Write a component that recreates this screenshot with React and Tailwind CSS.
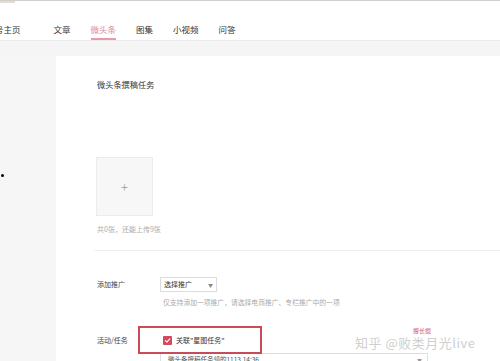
import React from 'react';

const tabs = ['文章', '微头条', '图集', '小视频', '问答'];

function NavTab({ label, active }) {
  return (
    <div className="flex flex-col">
      <span className={`text-[8.5px] leading-[13px] ${active ? 'text-[#e0879a]' : 'text-[#333]'}`}>{label}</span>
      <span className={`mt-[2px] h-[2px] ${active ? 'bg-[#e79aab]' : 'bg-transparent'}`} />
    </div>
  );
}

function CheckIcon() {
  return (
    <svg width="7" height="7" viewBox="0 0 10 10" fill="none">
      <path d="M2 5.2 L4.2 7.3 L8.2 2.8" stroke="#fff" strokeWidth="1.6" strokeLinecap="round" strokeLinejoin="round" />
    </svg>
  );
}

export default function App() {
  return (
    <div className="relative h-[361px] w-[500px] overflow-hidden bg-white font-['Noto_Sans_CJK_SC','Noto_Sans',sans-serif]">
      {/* header */}
      <header className="relative h-[40px] border-t border-[#cfcfcf] bg-white">
        <div className="absolute left-0 top-0 h-[2px] w-[15px] bg-[#e8dccb]" />
        <nav className="flex items-start gap-[20px] pt-[22px]">
          <div className="ml-[-5px] mr-[13px]">
            <NavTab label="号主页" />
          </div>
          {tabs.map((tab) => (
            <NavTab key={tab} label={tab} active={tab === '微头条'} />
          ))}
        </nav>
      </header>
      <div className="h-[16px] border-t border-[#ececec] bg-[#f5f5f5]" />

      <div className="flex h-[305px]">
        <aside className="relative w-[56px] bg-[#f6f6f6]">
          <span className="absolute left-[1px] top-[118px] h-[3px] w-[3px] rounded-full bg-black" />
        </aside>

        <main className="flex-1 bg-white pl-[41px] pt-[22px] text-[#333]">
          <h2 className="text-[8.2px] leading-[12px]">微头条撰稿任务</h2>

          <div className="mt-[67px] ml-[-1px] flex h-[59px] w-[57px] items-center justify-center border border-[#ececec] bg-[#f7f7f7]">
            <span className="text-[13px] font-light leading-none text-[#999]">+</span>
          </div>
          <p className="mt-[7px] text-[7px] leading-[12px] text-[#aaa]">共0张，还能上传9张</p>

          <div className="mt-[15px] ml-[-3px] h-px bg-[#efefef]" />

          <div className="mt-[26px] flex items-center">
            <span className="w-[63px] text-[7px] text-[#444]">添加推广</span>
            <div className="flex h-[15px] w-[57px] items-center justify-between border border-[#dcdcdc] px-[3px]">
              <span className="text-[7px] text-[#333]">选择推广</span>
              <span className="text-[5px] text-[#888]">▼</span>
            </div>
          </div>
          <p className="mt-[5px] ml-[66px] text-[6.8px] leading-[10px] text-[#aaa]">
            仅支持添加一项推广，请选择电商推广、专栏推广中的一项
          </p>

          <div className="mt-[19px] flex items-center">
            <span className="w-[41px] text-[7px] text-[#444]">活动/任务</span>
            <div className="flex h-[28px] w-[124px] items-center border-2 border-[#c94b5a] pl-[23px]">
              <span className="flex h-[9px] w-[9px] items-center justify-center rounded-[1px] bg-[#d4495c]">
                <CheckIcon />
              </span>
              <span className="ml-[4px] text-[7px] text-[#333]">关联"星图任务"</span>
            </div>
          </div>

          <div className="mt-[-1px] ml-[63px] flex h-[20px] w-[268px] items-start justify-between border border-[#dedede] pl-[7px] pr-[5px]">
            <span className="text-[6.5px] leading-[10px] text-[#555]">微头条撰稿任务领的1113.14:36</span>
            <span className="mt-[2px] text-[5px] text-[#999]">▼</span>
          </div>
        </main>
      </div>

      {/* watermark overlay */}
      <div className="pointer-events-none absolute left-[355px] top-[329px]">
        <span className="absolute left-[58px] top-[-1px] text-[6px] leading-none text-[#d45a6b]">擅长摄</span>
        <span className="text-[13px] leading-[18px] tracking-[0.5px] text-[#cfcfcf]">知乎 @败类月光live</span>
      </div>
    </div>
  );
}
